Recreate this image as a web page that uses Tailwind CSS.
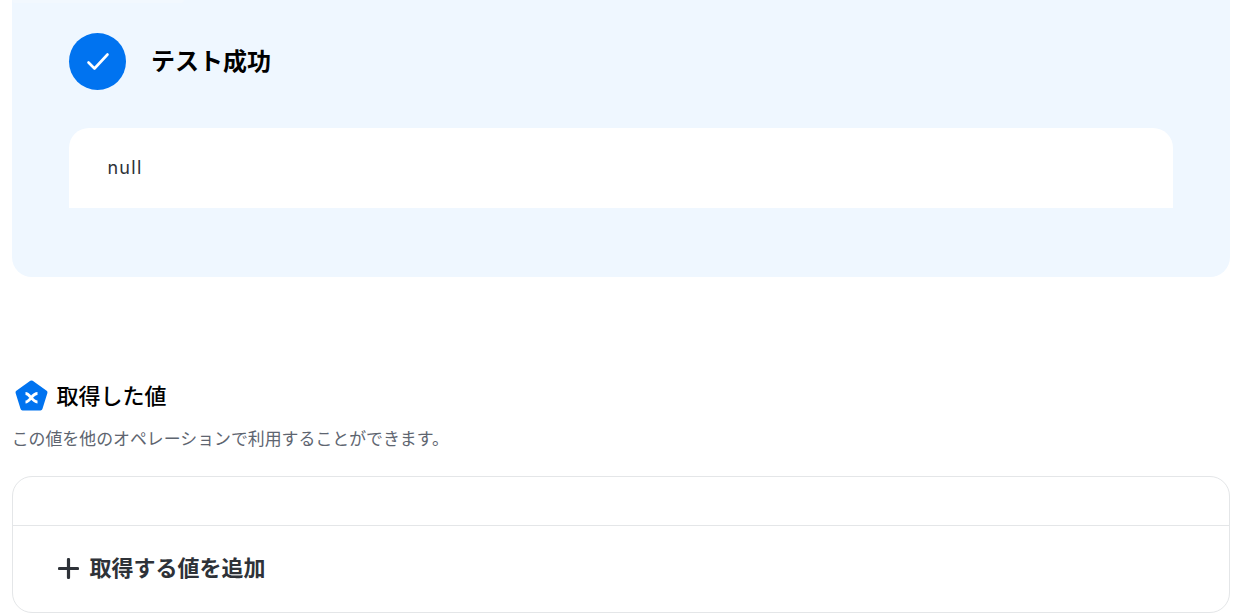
<!DOCTYPE html>
<html lang="ja"><head><meta charset="utf-8"><script src="https://cdn.jsdelivr.net/npm/@tailwindcss/browser@4"></script></head>
<body class="bg-white overflow-hidden font-['Inter','Noto_Sans_CJK_JP',sans-serif]">
<div class="w-[1250px] h-[616px] overflow-hidden">
<div class="relative ml-3 w-[1218px] h-[276.5px] bg-[#eff7ff] rounded-b-[20px] pl-[57.4px] pr-[57px] pt-[33px]">
<div class="absolute left-0 top-0 w-[172px] h-[3px] rounded-b-[12px] bg-[#f2f8fe]"></div>
<div class="flex items-center gap-[24.500px] h-[57px]">
<div class="w-[57px] h-[57px] rounded-full bg-[#0073f0] flex items-center justify-center"><svg width="24" height="24" viewBox="0 0 24 24" fill="none" stroke="#fff" stroke-width="2.6" stroke-linecap="round" stroke-linejoin="round"><path d="M2.500 12.500 8.500 18.500 21.500 4.500"/></svg></div>
<div class="text-[24px] font-semibold text-black leading-none">テスト成功</div>
</div>
<div class="mt-[38px] w-[1103.5px] h-[80px] bg-white rounded-t-[20px] px-[38px] pt-[28px] text-[18px] leading-[24px] tracking-[1.300px] text-[#2e3238]">null</div>
</div>
<div class="mt-[103.5px] ml-[15px] flex items-center gap-[8.500px] h-[32px]">
<svg width="33" height="32" viewBox="0 0 33 32"><path d="M16.500 2.500 30.500 12.500 25.500 28.500H7.500L2.500 12.500Z" fill="#0073f0" stroke="#0073f0" stroke-width="4" stroke-linejoin="round"/><path d="M10.500 13.500c4.500 0 6.500 8.500 12 8.500M22.500 13.500c-5.500 0-7.500 8.500-12 8.500" fill="none" stroke="#fff" stroke-width="2.800"/></svg>
<div class="text-[22px] font-medium text-black leading-none">取得した値</div>
</div>
<div class="mt-[15px] ml-[11.700px] text-[16.900px] leading-[24px] text-[#5e6570] whitespace-nowrap">この値を他のオペレーションで利用することができます。</div>
<div class="mt-[25px] ml-3 w-[1218px] h-[137px] border border-[#e4e6e8] rounded-[20px]">
<div class="h-[49px] border-b border-[#e4e6e8]"></div>
<div class="flex items-center gap-[11px] pl-[44.500px] h-[85px]">
<svg width="21" height="21" viewBox="0 0 21 21" fill="none" stroke="#2e3238" stroke-width="3.200" stroke-linecap="round"><path d="M10.500 1.500v18M1.500 10.500h18"/></svg>
<span class="text-[22px] font-semibold text-[#2e3238]">取得する値を追加</span>
</div>
</div>
</div>
</body></html>
